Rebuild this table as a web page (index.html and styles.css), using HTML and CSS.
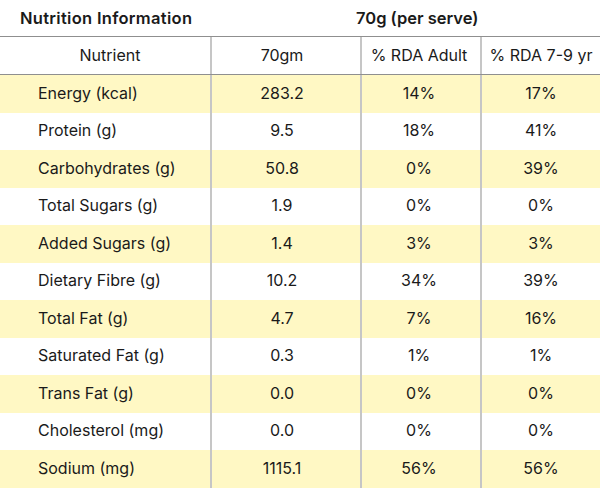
FILE: index.html
```html
<!DOCTYPE html>
<html>
<head>
<meta charset="utf-8">
<link rel="stylesheet" href="styles.css">
</head>
<body>
<div class="panel">
  <div class="title-row">
    <div class="title-left">Nutrition Information</div>
    <div class="title-right">70g (per serve)</div>
  </div>
  <div class="row head">
    <div class="cell name">Nutrient</div>
    <div class="cell">70gm</div>
    <div class="cell">% RDA Adult</div>
    <div class="cell">% RDA 7-9 yr</div>
  </div>
  <div class="row alt"><div class="cell name">Energy (kcal)</div><div class="cell">283.2</div><div class="cell">14%</div><div class="cell">17%</div></div>
  <div class="row"><div class="cell name">Protein (g)</div><div class="cell">9.5</div><div class="cell">18%</div><div class="cell">41%</div></div>
  <div class="row alt"><div class="cell name">Carbohydrates (g)</div><div class="cell">50.8</div><div class="cell">0%</div><div class="cell">39%</div></div>
  <div class="row"><div class="cell name">Total Sugars (g)</div><div class="cell">1.9</div><div class="cell">0%</div><div class="cell">0%</div></div>
  <div class="row alt"><div class="cell name">Added Sugars (g)</div><div class="cell">1.4</div><div class="cell">3%</div><div class="cell">3%</div></div>
  <div class="row"><div class="cell name">Dietary Fibre (g)</div><div class="cell">10.2</div><div class="cell">34%</div><div class="cell">39%</div></div>
  <div class="row alt"><div class="cell name">Total Fat (g)</div><div class="cell">4.7</div><div class="cell">7%</div><div class="cell">16%</div></div>
  <div class="row"><div class="cell name">Saturated Fat (g)</div><div class="cell">0.3</div><div class="cell">1%</div><div class="cell">1%</div></div>
  <div class="row alt"><div class="cell name">Trans Fat (g)</div><div class="cell">0.0</div><div class="cell">0%</div><div class="cell">0%</div></div>
  <div class="row"><div class="cell name">Cholesterol (mg)</div><div class="cell">0.0</div><div class="cell">0%</div><div class="cell">0%</div></div>
  <div class="row alt"><div class="cell name">Sodium (mg)</div><div class="cell">1115.1</div><div class="cell">56%</div><div class="cell">56%</div></div>
</div>
</body>
</html>
```
FILE: styles.css
```css
html, body {
  margin: 0;
  padding: 0;
  background: #ffffff;
}
body {
  font-family: Inter, "Liberation Sans", sans-serif;
  color: #1a1a1a;
  font-size: 16px;
}
.panel {
  width: 600px;
  height: 488px;
  overflow: hidden;
}
.title-row {
  height: 36px;
  display: flex;
  align-items: center;
  border-bottom: 1px solid #8f8f8f;
  font-weight: 600;
  font-size: 16.5px;
}
.title-left {
  padding-left: 20px;
  width: 336px;
  white-space: nowrap;
  letter-spacing: 0.3px;
}
.title-right {
  width: 120px;
  text-align: center;
  white-space: nowrap;
}
.row {
  display: grid;
  grid-template-columns: 210px 150px 120px 120px;
  height: 37.5px;
}
.row.head {
  height: 37px;
  border-bottom: 1px solid #8f8f8f;
}
.row.alt {
  background: #fff8c4;
}
.cell {
  display: flex;
  align-items: center;
  justify-content: center;
  border-left: 2px solid #c6c6c6;
  white-space: nowrap;
  padding-bottom: 2px;
}
.cell:first-child {
  border-left: none;
}
.cell.name {
  justify-content: flex-start;
  padding-left: 38px;
}
.head .cell.name {
  justify-content: center;
  padding-left: 10px;
}
.row .cell:nth-child(2) {
  padding-right: 8px;
}
.row .cell:nth-child(3) {
  padding-right: 4px;
}
```
